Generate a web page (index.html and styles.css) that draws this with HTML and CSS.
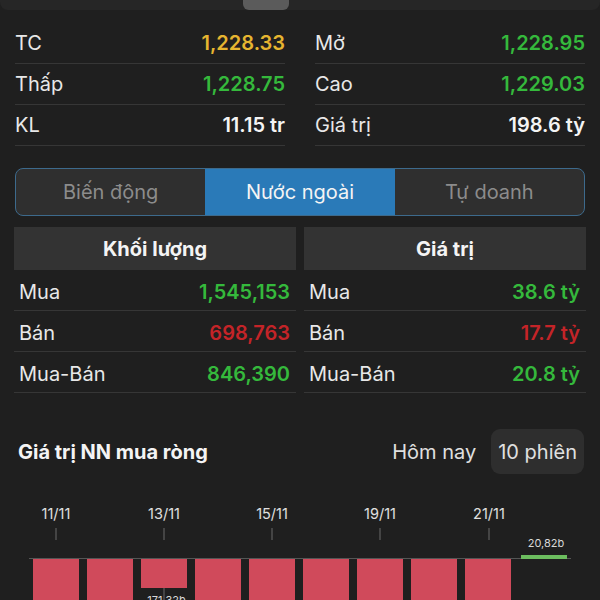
FILE: index.html
```html
<!DOCTYPE html>
<html lang="vi">
<head>
    <meta charset="UTF-8">
    <meta name="viewport" content="width=device-width, initial-scale=1.0">
    <title>VN-Index - Nước ngoài</title>
    <link rel="stylesheet" href="styles.css">
</head>
<body>
    <div class="sheet-top"><div class="handle"></div></div>

    <div class="stats">
        <div class="stat"><span>TC</span><span class="ref">1,228.33</span></div>
        <div class="stat"><span>Mở</span><span class="up">1,228.95</span></div>
        <div class="stat"><span>Thấp</span><span class="up">1,228.75</span></div>
        <div class="stat"><span>Cao</span><span class="up">1,229.03</span></div>
        <div class="stat"><span>KL</span><span class="plain">11.15 tr</span></div>
        <div class="stat"><span>Giá trị</span><span class="plain">198.6 tỷ</span></div>
    </div>

    <div class="tabs">
        <div class="tab">Biến động</div>
        <div class="tab active">Nước ngoài</div>
        <div class="tab">Tự doanh</div>
    </div>

    <div class="foreign">
        <div class="col">
            <div class="col-head">Khối lượng</div>
            <div class="row"><span>Mua</span><span class="up">1,545,153</span></div>
            <div class="row"><span>Bán</span><span class="down">698,763</span></div>
            <div class="row"><span>Mua-Bán</span><span class="up">846,390</span></div>
        </div>
        <div class="col">
            <div class="col-head">Giá trị</div>
            <div class="row"><span>Mua</span><span class="up">38.6 tỷ</span></div>
            <div class="row"><span>Bán</span><span class="down">17.7 tỷ</span></div>
            <div class="row"><span>Mua-Bán</span><span class="up">20.8 tỷ</span></div>
        </div>
    </div>

    <div class="chart-head">
        <h3>Giá trị NN mua ròng</h3>
        <div class="range">
            <span class="range-item">Hôm nay</span>
            <span class="range-item selected">10 phiên</span>
        </div>
    </div>

    <!-- net foreign value, last 10 sessions -->
    <svg class="chart" width="600" height="130" viewBox="0 0 600 130">
        <g class="dates">
            <text x="56" y="45">11/11</text>
            <text x="164" y="45">13/11</text>
            <text x="272" y="45">15/11</text>
            <text x="380" y="45">19/11</text>
            <text x="489" y="45">21/11</text>
        </g>
        <g class="ticks">
            <line x1="56" y1="54" x2="56" y2="66"/>
            <line x1="164" y1="54" x2="164" y2="66"/>
            <line x1="272" y1="54" x2="272" y2="66"/>
            <line x1="380" y1="54" x2="380" y2="66"/>
            <line x1="489" y1="54" x2="489" y2="66"/>
            <line x1="164" y1="114" x2="164" y2="130"/>
        </g>
        <line class="axis" x1="29" y1="84.5" x2="571" y2="84.5"/>
        <g class="bars-neg">
            <rect x="33" y="85" width="46" height="45"/>
            <rect x="87" y="85" width="46" height="45"/>
            <rect x="141" y="85" width="46" height="29"/>
            <rect x="195" y="85" width="46" height="45"/>
            <rect x="249" y="85" width="46" height="45"/>
            <rect x="303" y="85" width="46" height="45"/>
            <rect x="357" y="85" width="46" height="45"/>
            <rect x="411" y="85" width="46" height="45"/>
            <rect x="465" y="85" width="46" height="45"/>
        </g>
        <rect class="bar-pos" x="521" y="81" width="46" height="4"/>
        <text class="bar-label" x="546" y="73">20,82b</text>
        <text class="bar-label" x="164" y="130">-171,32b</text>
    </svg>
</body>
</html>
```

FILE: styles.css
```css
body {
    margin: 0;
    background: #1f1f1f;
    color: #e8e8e8;
    font-family: 'Inter', 'Roboto', sans-serif;
    font-size: 20px;
    overflow: hidden;
}
.sheet-top {
    height: 10px;
    background: #262626;
    border-radius: 0 0 8px 8px;
    padding-left: 243px;
}
.handle {
    width: 46px;
    height: 10px;
    background: #5b5b5b;
    border-radius: 0 0 6px 6px;
}
.stats {
    display: grid;
    grid-template-columns: 1fr 1fr;
    column-gap: 30px;
    padding: 0 15px;
    margin-top: 13px;
}
.stat {
    height: 40px;
    border-bottom: 1px solid #363636;
    display: flex;
    justify-content: space-between;
    align-items: center;
}
.stat span:last-child {
    font-weight: 600;
}
.ref {
    color: #e6b530;
}
.up {
    color: #35b93c;
}
.down {
    color: #c42428;
}
.plain {
    color: #f4f4f4;
}
.tabs {
    margin: 22px 15px 0;
    height: 46px;
    border: 1px solid #3d6a8c;
    border-radius: 8px;
    overflow: hidden;
    display: grid;
    grid-template-columns: 1fr 1fr 1fr;
    background: #2f2f2f;
}
.tab {
    display: flex;
    align-items: center;
    justify-content: center;
    color: #8c8c8c;
}
.tab.active {
    background: #2a7ab8;
    color: #f4f4f4;
}
.foreign {
    display: grid;
    grid-template-columns: 1fr 1fr;
    column-gap: 8px;
    padding: 0 14px;
    margin-top: 11px;
}
.col-head {
    height: 43px;
    background: #333333;
    display: flex;
    align-items: center;
    justify-content: center;
    font-weight: 700;
    color: #f4f4f4;
}
.row {
    height: 37px;
    border-bottom: 1px solid #363636;
    padding: 3px 6px 0 5px;
    display: flex;
    justify-content: space-between;
    align-items: center;
}
.row span:last-child {
    font-weight: 600;
}
.chart-head {
    margin-top: 36px;
    padding: 0 16px 0 18px;
    display: flex;
    justify-content: space-between;
    align-items: center;
}
.chart-head h3 {
    margin: 0;
    font-size: 20px;
    font-weight: 700;
    color: #f4f4f4;
}
.range {
    display: flex;
    align-items: center;
}
.range-item {
    padding: 0 7px;
    height: 45px;
    display: flex;
    align-items: center;
    color: #e0e0e0;
}
.range-item.selected {
    background: #2e2e2e;
    border-radius: 9px;
    margin-left: 8px;
}
.chart {
    display: block;
}
.dates text {
    fill: #e0e0e0;
    font-size: 14.5px;
    text-anchor: middle;
}
.ticks line {
    stroke: #6a6a6a;
    stroke-width: 1;
}
.axis {
    stroke: #555555;
    stroke-width: 1;
}
.bars-neg rect {
    fill: #d04a5b;
}
.bar-pos {
    fill: #6cbd5f;
}
.bar-label {
    fill: #d8d8d8;
    font-size: 11px;
    text-anchor: middle;
}
```
